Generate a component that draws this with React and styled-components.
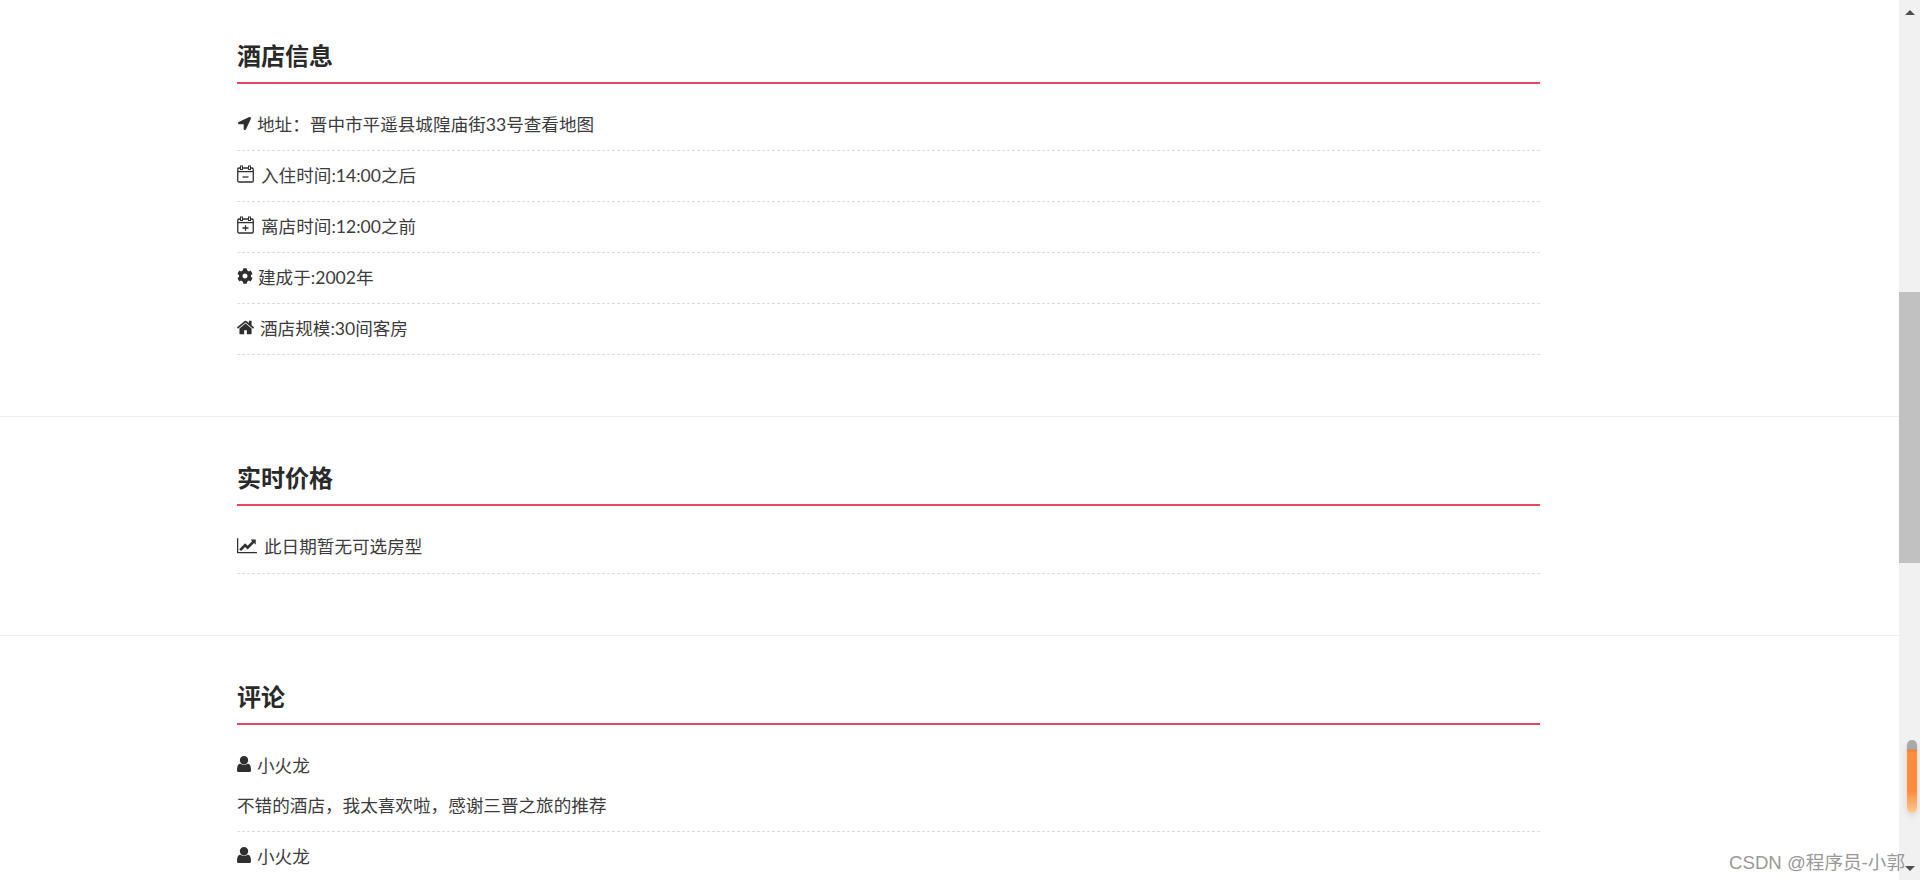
import React from "react";
import styled, { createGlobalStyle } from "styled-components";
import { FaLocationArrow, FaCog } from "react-icons/fa";

const GlobalStyle = createGlobalStyle`
    html, body {
        margin: 0;
        padding: 0;
        background: #fff;
    }
    body {
        font-family: Lato, "Noto Sans CJK SC", sans-serif;
        color: #3c3c3c;
    }
`;

const Page = styled.div`
    display: flex;
    position: relative;
    width: 1920px;
    height: 880px;
    overflow: hidden;
`;

const Main = styled.main`
    flex: 1;
    min-width: 0;
`;

const Section = styled.section`
    padding: 50px 359px 61px 237px;
    border-bottom: 1px solid #eee;

    &:first-child {
        padding-top: 45px;
    }
`;

const Title = styled.h2`
    margin: 0 0 16px;
    padding-bottom: 15px;
    height: 22px;
    line-height: 22px;
    font-size: 24px;
    font-weight: 700;
    color: #2a2a2a;
    border-bottom: 2px solid #e8465f;
`;

const Row = styled.div`
    display: flex;
    align-items: center;
    gap: ${(p) => p.$gap || 5}px;
    height: ${(p) => p.$height || 46}px;
    padding-bottom: 4px;
    font-size: 17.6px;
    border-bottom: 1px dashed #ddd;
`;

const Comment = styled.div`
    padding: 9px 0 11px;
    border-bottom: 1px dashed #ddd;
    font-size: 17.6px;
`;

const Author = styled.div`
    display: flex;
    align-items: center;
    gap: 6px;
    height: 28px;
    margin-bottom: 14px;
`;

const Body = styled.div`
    height: 28px;
    line-height: 28px;
`;

const IconSlot = styled.span`
    display: inline-flex;
    align-items: center;
    justify-content: center;
    flex: none;
    width: ${(p) => p.$w}px;
    color: #2f2f2f;
    font-size: ${(p) => p.$size || 15}px;
`;

const Scrollbar = styled.aside`
    flex: none;
    position: relative;
    width: 21px;
    height: 880px;
    background: #f1f1f1;
`;

const Thumb = styled.div`
    position: absolute;
    top: 292px;
    left: 0;
    width: 100%;
    height: 271px;
    background: #c1c1c1;
`;

const ArrowUp = styled.div`
    position: absolute;
    top: 10px;
    left: 6px;
    width: 0;
    height: 0;
    border-left: 5px solid transparent;
    border-right: 5px solid transparent;
    border-bottom: 5px solid #505050;
`;

const ArrowDown = styled.div`
    position: absolute;
    top: 866px;
    left: 6px;
    width: 0;
    height: 0;
    border-left: 5px solid transparent;
    border-right: 5px solid transparent;
    border-top: 5px solid #505050;
`;

const Marker = styled.div`
    position: absolute;
    top: 740px;
    left: 8px;
    width: 10px;
    height: 73px;
    border-radius: 5px;
    background: linear-gradient(
        to bottom,
        #a9a9a9 0,
        #a9a9a9 9px,
        #e8813a 10px,
        #ff8c3c 13px,
        #ff8c3c 70%,
        #ffc98f 100%
    );
    box-shadow: 0 3px 7px rgba(0, 0, 0, 0.12);
`;

const Watermark = styled.div`
    position: absolute;
    right: 15px;
    top: 851px;
    line-height: 24px;
    font-size: 18.6px;
    font-family: "Liberation Sans", "Noto Sans CJK SC", sans-serif;
    color: #999;
    white-space: nowrap;
`;

const CalendarIcon = ({ plus }) => {
    return (
        <svg width="17" height="18" viewBox="0 0 17 18" fill="none" stroke="currentColor">
            <rect x="0.75" y="3" width="15.5" height="14" rx="1.2" strokeWidth="1.3" />
            <path d="M1 6.6h15" strokeWidth="1.3" />
            <path d="M4.5 0.5v4.5M12.5 0.5v4.5" strokeWidth="3" />
            <path d="M4.5 1.5v2.5M12.5 1.5v2.5" strokeWidth="1" stroke="#fff" />
            <path d={plus ? "M5.5 12h6M8.5 9.2v5.6" : "M5.5 12h6"} strokeWidth="1.3" />
        </svg>
    );
};

const LineChartIcon = () => {
    return (
        <svg width="20" height="17.5" viewBox="0 0 2048 1792" fill="currentColor">
            <path d="M2048 1536v128h-2048v-1536h128v1408h1920zm-128-1248v435q0 21-19.5 29.5t-35.5-7.5l-121-121-633 633q-10 10-23 10t-23-10l-233-233-416 416-192-192 585-585q10-10 23-10t23 10l233 233 464-464-121-121q-16-16-7.5-35.5t29.5-19.5h435q14 0 23 9t9 23z" />
        </svg>
    );
};

const UserIcon = () => {
    return (
        <svg width="14" height="16.8" viewBox="256 128 1280 1536" fill="currentColor">
            <path d="M1536 1399q0 109-62.5 187t-150.5 78h-854q-88 0-150.5-78t-62.5-187q0-85 8.5-160.5t31.5-152 58.5-131 94-89 134.5-34.5q131 128 313 128t313-128q76 0 134.5 34.5t94 89 58.5 131 31.5 152 8.5 160.5zm-256-887q0 159-112.5 271.5t-271.5 112.5-271.5-112.5-112.5-271.5 112.5-271.5 271.5-112.5 271.5 112.5 112.5 271.5z" />
        </svg>
    );
};

const HomeIcon = () => {
    return (
        <svg width="17" height="17" viewBox="90 200 1610 1400" fill="currentColor">
            <path d="M1472 992v480q0 26-19 45t-45 19h-384v-384h-256v384h-384q-26 0-45-19t-19-45v-480q0-1 .5-3t.5-3l575-474 575 474q1 2 1 6zm223-69l-62 74q-8 9-21 11h-3q-13 0-21-7l-692-577-692 577q-12 8-24 7-13-2-21-11l-62-74q-8-10-7-23.5t11-21.5l719-599q32-26 76-26t76 26l244 204v-195q0-14 9-23t23-9h192q14 0 23 9t9 23v408l219 182q10 8 11 21.5t-7 23.5z" />
        </svg>
    );
};

const hotelRows = [
    { icon: <FaLocationArrow />, w: 14, size: 13, gap: 6, text: "地址：晋中市平遥县城隍庙街33号查看地图" },
    { icon: <CalendarIcon />, w: 17, gap: 7, text: "入住时间:14:00之后" },
    { icon: <CalendarIcon plus />, w: 17, gap: 7, text: "离店时间:12:00之前" },
    { icon: <FaCog />, w: 16, size: 16, gap: 5, text: "建成于:2002年" },
    { icon: <HomeIcon />, w: 17, gap: 6, text: "酒店规模:30间客房" },
];

const App = () => {
    return (
        <Page>
            <GlobalStyle />
            <Main>
                <Section>
                    <Title>酒店信息</Title>
                    {hotelRows.map((row) => (
                        <Row key={row.text} $gap={row.gap}>
                            <IconSlot $w={row.w} $size={row.size}>{row.icon}</IconSlot>
                            {row.text}
                        </Row>
                    ))}
                </Section>
                <Section>
                    <Title>实时价格</Title>
                    <Row $gap={7} $height={47}>
                        <IconSlot $w={20}><LineChartIcon /></IconSlot>
                        此日期暂无可选房型
                    </Row>
                </Section>
                <Section>
                    <Title>评论</Title>
                    <Comment>
                        <Author>
                            <IconSlot $w={14}><UserIcon /></IconSlot>
                            小火龙
                        </Author>
                        <Body>不错的酒店，我太喜欢啦，感谢三晋之旅的推荐</Body>
                    </Comment>
                    <Comment>
                        <Author>
                            <IconSlot $w={14}><UserIcon /></IconSlot>
                            小火龙
                        </Author>
                    </Comment>
                </Section>
            </Main>
            <Scrollbar>
                <ArrowUp />
                <Thumb />
                <Marker />
                <ArrowDown />
            </Scrollbar>
            <Watermark>CSDN @程序员-小郭</Watermark>
        </Page>
    );
};

export default App;
